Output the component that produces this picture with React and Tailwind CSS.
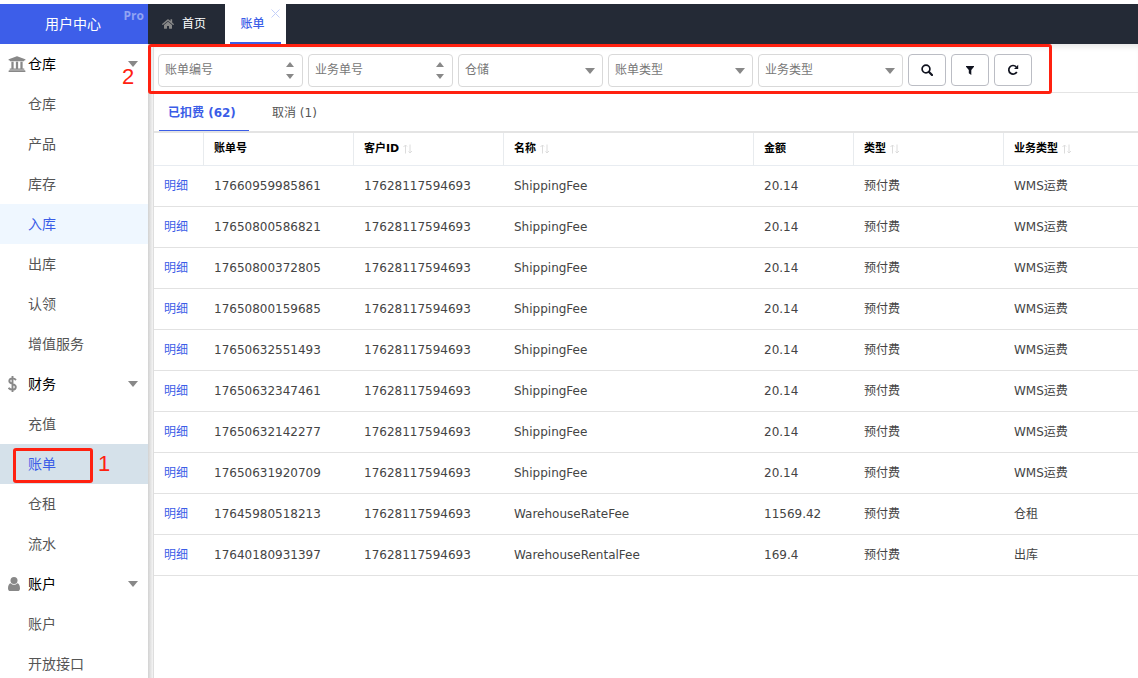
import { useState } from "react";
import { FaHome, FaUniversity } from "react-icons/fa";

const MENU = [
  { title: "仓库", icon: "bank", items: ["仓库", "产品", "库存", "入库", "出库", "认领", "增值服务"] },
  { title: "财务", icon: "dollar", items: ["充值", "账单", "仓租", "流水"] },
  { title: "账户", icon: "user", items: ["账户", "开放接口"] },
];

const COLUMNS = [
  { label: "", width: "w-[50px]" },
  { label: "账单号", width: "w-[150px]" },
  { label: "客户ID", width: "w-[150px]", sortable: true },
  { label: "名称", width: "w-[250px]", sortable: true },
  { label: "金额", width: "w-[100px]" },
  { label: "类型", width: "w-[150px]", sortable: true },
  { label: "业务类型", width: "", sortable: true },
];

const BILLS = [
  { id: "17660959985861", name: "ShippingFee", amount: "20.14", kind: "WMS运费" },
  { id: "17650800586821", name: "ShippingFee", amount: "20.14", kind: "WMS运费" },
  { id: "17650800372805", name: "ShippingFee", amount: "20.14", kind: "WMS运费" },
  { id: "17650800159685", name: "ShippingFee", amount: "20.14", kind: "WMS运费" },
  { id: "17650632551493", name: "ShippingFee", amount: "20.14", kind: "WMS运费" },
  { id: "17650632347461", name: "ShippingFee", amount: "20.14", kind: "WMS运费" },
  { id: "17650632142277", name: "ShippingFee", amount: "20.14", kind: "WMS运费" },
  { id: "17650631920709", name: "ShippingFee", amount: "20.14", kind: "WMS运费" },
  { id: "17645980518213", name: "WarehouseRateFee", amount: "11569.42", kind: "仓租" },
  { id: "17640180931397", name: "WarehouseRentalFee", amount: "169.4", kind: "出库" },
];

function Caret({ up = false, className = "" }) {
  return (
    <svg viewBox="0 0 10 6" preserveAspectRatio="none" className={className} fill="currentColor" aria-hidden="true">
      <path d={up ? "M0 6L5 0L10 6Z" : "M0 0H10L5 6Z"} />
    </svg>
  );
}

function MenuIcon({ name }) {
  if (name === "bank") return <FaUniversity size={18} className="shrink-0" />;
  if (name === "dollar") {
    return (
      <svg viewBox="0 0 9 16" className="h-4 w-[9px]" fill="none" stroke="currentColor" strokeWidth="1.9" aria-hidden="true">
        <path d="M4.5 0V16M8 4C7 2.9 5.8 2.4 4.4 2.4C2.6 2.4 1.3 3.4 1.3 5C1.3 8.6 7.8 7 7.8 10.9C7.8 12.6 6.4 13.6 4.5 13.6C2.9 13.6 1.5 13 0.5 11.8" />
      </svg>
    );
  }
  return (
    <svg viewBox="0 0 12 14" className="h-[14px] w-3" fill="currentColor" aria-hidden="true">
      <circle cx="6" cy="3.5" r="3.5" />
      <path d="M2.6 6.3C1 6.8 0 8.5 0 11.4C0 13 1 14 2.4 14H9.6C11 14 12 13 12 11.4C12 8.5 11 6.8 9.4 6.3A4.6 4.6 0 0 1 2.6 6.3Z" />
    </svg>
  );
}

function SortIcon() {
  return (
    <svg viewBox="0 0 10 10" className="h-[10px] w-[10px] text-[#dcdcdc]" fill="none" stroke="currentColor" aria-hidden="true">
      <path d="M2.5 9.5V1M0.5 3L2.5 1L4 2.5M7 0.5V9M5.5 7.5L7 9L9 7" />
    </svg>
  );
}

function SearchIcon() {
  return (
    <svg viewBox="0 0 12 12" className="h-3 w-3" fill="none" stroke="currentColor" aria-hidden="true">
      <circle cx="5" cy="5" r="3.9" strokeWidth="1.7" />
      <path d="M7.8 7.8L11 11" strokeWidth="2.2" strokeLinecap="round" />
    </svg>
  );
}

function FilterIcon() {
  return (
    <svg viewBox="0 0 8 9" className="h-[9px] w-2" fill="currentColor" aria-hidden="true">
      <path d="M0 0H8V0.8L5.3 3.9V9L2.8 7.2V3.9L0 0.8Z" />
    </svg>
  );
}

function RefreshIcon() {
  return (
    <svg viewBox="0 0 12 12" className="h-3 w-3" aria-hidden="true">
      <path d="M9.2 2.8A4.3 4.3 0 1 0 9.8 8" fill="none" stroke="currentColor" strokeWidth="1.7" />
      <path d="M11.2 0.8V5H7Z" fill="currentColor" />
    </svg>
  );
}

function NumberFilter({ label }) {
  return (
    <div className="flex h-[33px] w-[145px] shrink-0 items-center rounded border border-[#d9d9d9] bg-white pr-2 pl-1.5">
      <input
        type="text"
        aria-label={label}
        placeholder={label}
        className="h-full min-w-0 flex-1 text-xs outline-none placeholder:text-[#777]"
      />
      <div className="flex flex-col gap-[7px] text-[#888]">
        <Caret up className="h-[5px] w-2" />
        <Caret className="h-[5px] w-2" />
      </div>
    </div>
  );
}

function SelectFilter({ label }) {
  return (
    <div className="relative shrink-0">
      <select
        aria-label={label}
        className="block h-[33px] w-[145px] appearance-none rounded border border-[#d9d9d9] bg-white pr-6 pl-1.5 text-xs text-[#777]"
      >
        <option>{label}</option>
      </select>
      <Caret className="pointer-events-none absolute top-[14px] right-2 h-[6px] w-[10px] text-[#888]" />
    </div>
  );
}

function ToolButton({ label, children }) {
  return (
    <button
      type="button"
      title={label}
      aria-label={label}
      className="flex h-8 w-[38px] shrink-0 items-center justify-center rounded border border-[#bbbdc4] bg-white text-[#10131f]"
    >
      {children}
    </button>
  );
}

function StepNumber({ className, children }) {
  return (
    <span className={`absolute font-['Liberation_Sans',sans-serif] text-[22px] leading-8 text-[#ff2110] ${className}`}>
      {children}
    </span>
  );
}

function Sidebar() {
  return (
    <nav className="w-[148px] shrink-0 text-sm">
      {MENU.map((group) => (
        <div key={group.title}>
          <button type="button" className="flex h-10 w-full items-center pr-[10px] pl-2 text-black">
            <span className="flex w-5 items-center text-[#888]">
              <MenuIcon name={group.icon} />
            </span>
            <span className="flex-1 text-left">{group.title}</span>
            <Caret className="h-[6px] w-[10px] text-[#888]" />
          </button>
          {group.items.map((item) => {
            const active = item === "账单";
            const hovered = item === "入库";
            return (
              <a
                key={item}
                href="#"
                className={`relative flex h-10 items-center pl-7 ${
                  active ? "bg-[#d5e1ea] text-[#3b5de7]" : hovered ? "bg-[#eff7ff] text-[#3b5de7]" : "text-[#555]"
                }`}
              >
                {item}
                {active && (
                  <>
                    <span className="absolute top-1 left-[13px] h-[35px] w-20 rounded-[3px] border-3 border-[#ff2110]" />
                    <StepNumber className="top-1 left-[98px]">1</StepNumber>
                  </>
                )}
              </a>
            );
          })}
        </div>
      ))}
    </nav>
  );
}

function Toolbar() {
  return (
    <div className="relative flex h-[49px] items-center gap-[5px] border-b border-[#e4e4e4] pt-1 pl-1 inset-shadow-[0_6px_6px_-4px_rgba(0,0,0,0.12)]">
      <NumberFilter label="账单编号" />
      <NumberFilter label="业务单号" />
      <SelectFilter label="仓储" />
      <SelectFilter label="账单类型" />
      <SelectFilter label="业务类型" />
      <ToolButton label="搜索">
        <SearchIcon />
      </ToolButton>
      <ToolButton label="筛选">
        <FilterIcon />
      </ToolButton>
      <ToolButton label="刷新">
        <RefreshIcon />
      </ToolButton>
      <span className="pointer-events-none absolute top-0 -left-[6px] h-[50px] w-[904px] rounded-[3px] border-3 border-[#ff2110]" />
      <StepNumber className="top-[17px] -left-8">2</StepNumber>
    </div>
  );
}

function BillTable() {
  return (
    <table className="w-full table-fixed border-separate border-spacing-0 text-left text-xs text-[#444]">
      <thead>
        <tr className="h-[33px] text-[11px] text-black">
          {COLUMNS.map((col, i) => (
            <th
              key={i}
              className={`border-r border-b border-r-[#e8ebee] border-b-[#e8ecf1] p-0 pl-[10px] font-bold last:border-r-0 ${col.width}`}
            >
              <span className="flex items-center gap-1">
                {col.label}
                {col.sortable && <SortIcon />}
              </span>
            </th>
          ))}
        </tr>
      </thead>
      <tbody className="[&_td]:border-b [&_td]:border-[#e2e2e2] [&_td]:p-0 [&_td]:pl-[10px]">
        {BILLS.map((bill) => (
          <tr key={bill.id} className="h-[41px]">
            <td>
              <a href="#" className="text-[#3b5de7]">
                明细
              </a>
            </td>
            <td>{bill.id}</td>
            <td>17628117594693</td>
            <td>{bill.name}</td>
            <td>{bill.amount}</td>
            <td>预付费</td>
            <td>{bill.kind}</td>
          </tr>
        ))}
      </tbody>
    </table>
  );
}

export default function App() {
  const [tab, setTab] = useState("charged");
  const tabClass = (name) =>
    tab === name ? "border-[#3b5de7] font-bold text-[#3b5de7]" : "border-transparent text-[#555]";

  return (
    <div className="flex h-screen flex-col overflow-hidden bg-white pt-1 font-['DejaVu_Sans','Noto_Sans_CJK_SC',sans-serif]">
      <header className="flex h-10 shrink-0 bg-[#242a36]">
        <div className="relative flex w-[148px] items-center justify-center bg-[#3d5ee9] pr-[2px] text-sm text-white">
          用户中心
          <span className="absolute top-1 right-1 font-['Open_Sans',sans-serif] text-xs leading-4 font-bold text-[#90a3f3]">
            Pro
          </span>
        </div>
        <a href="#" className="flex w-[77px] items-center gap-2 pl-[14px] text-xs text-white">
          <FaHome size={12} className="text-[#888]" />
          首页
        </a>
        <div className="relative flex w-[61px] justify-center bg-white px-[5px]">
          <a
            href="#"
            className="flex flex-1 items-center justify-center border-b-2 border-[#3b5de7] pt-[2px] pr-[6px] text-xs font-medium text-[#3b5de7]"
          >
            账单
          </a>
          <button type="button" aria-label="关闭" className="absolute top-[5px] right-[6px] text-[#c3cff9]">
            <svg viewBox="0 0 9 9" className="h-[9px] w-[9px]" stroke="currentColor" aria-hidden="true">
              <path d="M0.5 0.5L8.5 8.5M8.5 0.5L0.5 8.5" />
            </svg>
          </button>
        </div>
      </header>

      <div className="flex min-h-0 flex-1">
        <Sidebar />
        <div className="w-[5px] shrink-0 bg-linear-to-r from-[#d2d2d2] to-[#f4f4f4]" />
        <main className="min-w-0 flex-1 border-l border-[#dedede]">
          <Toolbar />
          <div className="flex h-10 gap-[14px] border-b-2 border-[#e4e4e4] pl-[5px] text-xs">
            <button
              type="button"
              onClick={() => setTab("charged")}
              className={`min-w-[90px] border-b px-[9px] pt-[2px] text-left ${tabClass("charged")}`}
            >
              已扣费 (62)
            </button>
            <button
              type="button"
              onClick={() => setTab("cancelled")}
              className={`border-b px-[9px] pt-[2px] text-left ${tabClass("cancelled")}`}
            >
              取消 (1)
            </button>
          </div>
          <BillTable />
        </main>
      </div>
    </div>
  );
}
